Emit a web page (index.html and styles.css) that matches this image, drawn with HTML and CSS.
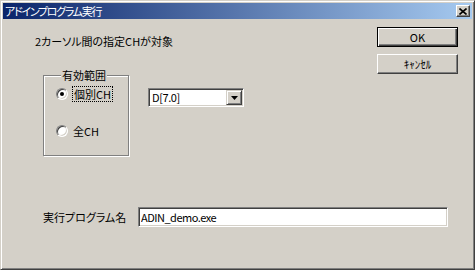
FILE: index.html
```html
<!DOCTYPE html>
<html>
<head>
    <meta charset="utf-8">
    <title>アドインプログラム実行</title>
    <link rel="stylesheet" href="styles.css">
</head>
<body>
    <div class="window">
        <div class="titlebar">
            <span class="title">アドインプログラム実行</span>
            <span class="close-btn">
                <svg width="8" height="7" viewBox="0 0 8 7">
                    <path d="M0.5 0.5 L7.5 6.5 M7.5 0.5 L0.5 6.5" stroke="#000" stroke-width="1.6" fill="none"/>
                </svg>
            </span>
        </div>

        <div class="client">
            <div class="top">
                <div class="main">
                    <p class="message">2カーソル間の指定CHが対象</p>
                    <div class="range-row">
                        <fieldset class="group">
                            <legend>有効範囲</legend>
                            <label class="radio-row">
                                <span class="radio checked"></span>
                                <span class="focus">個別CH</span>
                            </label>
                            <label class="radio-row second">
                                <span class="radio"></span>
                                <span>全CH</span>
                            </label>
                        </fieldset>
                        <div class="combo">
                            <span class="combo-text">D[7.0]</span>
                            <span class="combo-btn">
                                <svg width="7" height="4" viewBox="0 0 7 4"><path d="M0 0 H7 L3.5 4 Z" fill="#000"/></svg>
                            </span>
                        </div>
                    </div>
                </div>
                <div class="buttons">
                    <button class="btn default" type="button">OK</button>
                    <button class="btn" type="button">ｷｬﾝｾﾙ</button>
                </div>
            </div>

            <div class="program-row">
                <span class="program-label">実行プログラム名</span>
                <input class="program-input" type="text" value="ADIN_demo.exe">
            </div>
        </div>
    </div>
</body>
</html>
```

FILE: styles.css
```css
body {
    margin: 0;
    padding: 0;
    background: #d4d0c8;
    font-family: "Noto Sans CJK JP", "Liberation Sans", sans-serif;
    font-size: 11px;
    line-height: 14px;
    color: #000;
    font-feature-settings: "palt";
}

.window {
    width: 475px;
    height: 270px;
    box-sizing: border-box;
    background: #d4d0c8;
    border: 1px solid;
    border-color: #d4d0c8 #404040 #404040 #d4d0c8;
    box-shadow: inset 1px 1px 0 #fff, inset -1px -1px 0 #808080;
    padding: 2px;
}

/* title bar */
.titlebar {
    height: 16px;
    display: flex;
    align-items: center;
    justify-content: space-between;
    background: linear-gradient(to right, #0a246a, #a6caf0);
    padding-left: 2px;
}

.title {
    color: #fff;
    font-size: 11px;
    line-height: 16px;
    letter-spacing: -1.3px;
}

.close-btn {
    width: 14px;
    height: 12px;
    box-sizing: border-box;
    margin-right: 2px;
    display: flex;
    align-items: center;
    justify-content: center;
    background: #d4d0c8;
    border: 1px solid;
    border-color: #fff #404040 #404040 #fff;
    box-shadow: inset -1px -1px 0 #808080;
}

/* client area */
.top {
    display: flex;
    justify-content: space-between;
}

.main {
    margin-left: 32px;
}

.message {
    margin: 15px 0 0;
}

.range-row {
    display: flex;
    align-items: flex-start;
    margin-top: 20px;
    margin-left: 8px;
}

.group {
    width: 86px;
    height: 88px;
    box-sizing: border-box;
    margin: 0;
    padding: 0 0 0 12px;
    border: 1px solid #808080;
    box-shadow: inset 1px 1px 0 #fff, 1px 1px 0 #fff;
}

.group legend {
    padding: 0 1px;
    margin-left: 5px;
    line-height: 14px;
    background: #d4d0c8;
}

.radio-row {
    display: flex;
    align-items: center;
    gap: 5px;
    height: 14px;
    margin-top: 5px;
}

.radio-row.second {
    margin-top: 23px;
}

.radio {
    width: 12px;
    height: 12px;
    box-sizing: border-box;
    border-radius: 50%;
    background: #fff;
    border: 1px solid;
    border-color: #808080 #fff #fff #808080;
    box-shadow: inset 1px 1px 0 #404040, inset -1px -1px 0 #d4d0c8;
    display: flex;
    align-items: center;
    justify-content: center;
}

.radio.checked::after {
    content: '';
    width: 4px;
    height: 4px;
    border-radius: 50%;
    background: #000;
}

.focus {
    outline: 1px dotted #000;
    outline-offset: 0;
    padding: 0 1px;
}

.combo {
    width: 96px;
    height: 19px;
    box-sizing: border-box;
    margin-left: 19px;
    margin-top: 20px;
    display: flex;
    justify-content: space-between;
    background: #fff;
    border: 1px solid;
    border-color: #808080 #fff #fff #808080;
    box-shadow: inset 1px 1px 0 #404040, inset -1px -1px 0 #d4d0c8;
    padding: 1px;
}

.combo-text {
    padding-left: 2px;
    line-height: 15px;
    letter-spacing: -0.4px;
}

.combo-btn {
    width: 16px;
    height: 15px;
    box-sizing: border-box;
    background: #d4d0c8;
    border: 1px solid;
    border-color: #d4d0c8 #404040 #404040 #d4d0c8;
    box-shadow: inset 1px 1px 0 #fff, inset -1px -1px 0 #808080;
    display: flex;
    align-items: center;
    justify-content: center;
}

/* buttons */
.buttons {
    display: flex;
    flex-direction: column;
    gap: 7px;
    margin-top: 8px;
    margin-right: 14px;
}

.btn {
    width: 81px;
    height: 20px;
    box-sizing: border-box;
    padding: 0;
    font-family: inherit;
    font-size: 11px;
    font-weight: normal;
    line-height: 14px;
    font-feature-settings: "palt";
    color: #000;
    background: #d4d0c8;
    border: 1px solid;
    border-color: #fff #404040 #404040 #fff;
    box-shadow: inset -1px -1px 0 #808080, inset 1px 1px 0 #d4d0c8;
}

.btn.default {
    border-color: #000;
    box-shadow: inset 1px 1px 0 #fff, inset -1px -1px 0 #404040, inset -2px -2px 0 #808080;
}

/* program name row */
.program-row {
    display: flex;
    align-items: center;
    margin-top: 51px;
    margin-left: 40px;
}

.program-label {
    width: 95px;
}

.program-input {
    width: 310px;
    height: 20px;
    box-sizing: border-box;
    margin: 0;
    padding: 0 2px;
    font-family: inherit;
    font-size: 11px;
    letter-spacing: -0.5px;
    color: #000;
    background: #fff;
    border: 1px solid;
    border-color: #808080 #fff #fff #808080;
    box-shadow: inset 1px 1px 0 #404040, inset -1px -1px 0 #d4d0c8;
    outline: none;
}
```
